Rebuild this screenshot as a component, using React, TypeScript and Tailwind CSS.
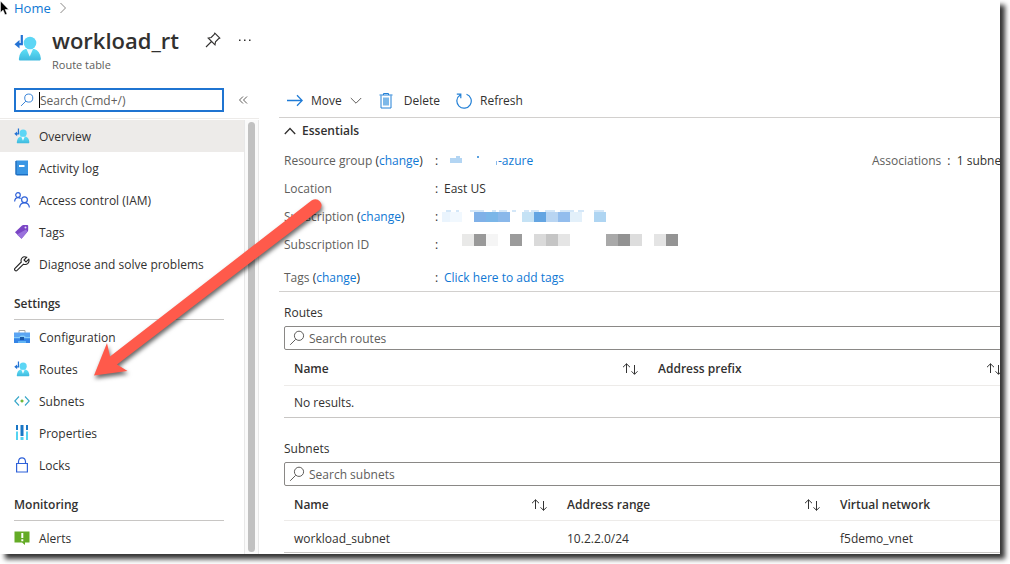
import type { ReactNode } from 'react';

interface MenuItem {
    label: string;
    icon: ReactNode;
    active?: boolean;
}

function RouteTableIcon({ className }: { className: string }) {
    return (
        <svg viewBox="0 0 28 28" className={className} aria-hidden="true">
            <defs>
                <linearGradient id="person" x1="0" y1="0" x2="0" y2="1">
                    <stop offset="0" stopColor="#5fe0f7" />
                    <stop offset="1" stopColor="#3fb9de" />
                </linearGradient>
            </defs>
            <path d="M5.5 26.500q-.9-.4-.6-2 1-8 6.500-9.500h9q5.500 1.500 6.500 9.500 0 1.600-1 2z" fill="url(#person)" />
            <path d="m12.500 15 3.200 7.500 3.300-7.500z" fill="#eefaff" />
            <circle cx="16" cy="9" r="6.300" fill="#5cd6f5" />
            <path d="M7.800 1v9.200H3.500" fill="none" stroke="#2372d4" strokeWidth="2.200" />
            <path d="M5.500 6v8.500L.5 10.200z" fill="#2372d4" />
        </svg>
    );
}

function LogIcon() {
    return (
        <svg viewBox="0 0 16 16" className="size-4" aria-hidden="true">
            <path d="M1.500 1.500 2.500.5h11.500v14.500H2.500q-1 0-1-1z" fill="#3a96e4" />
            <path d="M1.500 1.500 2.500.5v14.500q-1 0-1-1z" fill="#185fae" />
            <path d="M2.500 14H14v1.500H2.500z" fill="#1b6fc4" />
            <path d="M5 5h5.500v2H5z" fill="#fff" />
        </svg>
    );
}

function PeopleIcon() {
    return (
        <svg viewBox="0 0 16 16" className="size-4" fill="none" stroke="#2f62d9" strokeWidth="1.200" aria-hidden="true">
            <circle cx="4" cy="3" r="2.300" />
            <path d="M.6 9.500Q1 5.600 4 5.600q1.700 0 2.600 1" />
            <circle cx="10.500" cy="7.800" r="2.900" />
            <path d="M5.600 15.500q.5-4.700 4.900-4.700t4.900 4.700" />
        </svg>
    );
}

function TagIcon() {
    return (
        <svg viewBox="0 0 16 16" className="size-4" aria-hidden="true">
            <path d="M1 8.300 8 1.500q.6-.5 1.400-.5h3.800q1 0 1 1v4q0 .8-.5 1.400L7.500 14.800z" fill="#7a45c4" />
            <path d="m3 10.500 9-5 1.500 2L7.500 14.800z" fill="#9a72dc" />
            <circle cx="11.500" cy="3.400" r="1" fill="#e6d9fa" />
        </svg>
    );
}

function WrenchIcon() {
    return (
        <svg viewBox="0 0 16 16" className="size-4" fill="none" stroke="#222" strokeWidth="1.100" aria-hidden="true">
            <path d="M14.800 3.200 12 6 10 4l2.700-2.800Q9.700.1 8 2q-1.500 1.700-.7 4L1 12.300q-.9 1.100 0 2 1 1 2.100.1L9.500 8.200q2.600.9 4.400-.8 1.700-1.900.9-4.200z" />
        </svg>
    );
}

function ToolboxIcon() {
    return (
        <svg viewBox="0 0 16 16" className="size-4" aria-hidden="true">
            <path d="M5 4V1.500h6V4" fill="none" stroke="#aaa" strokeWidth="1" />
            <path d="M0 3.500h16v5H0z" fill="#5ba5f3" />
            <path d="M0 8.500h16V14H0z" fill="#3484e6" />
            <path d="M0 8h5l2-1.500h3L12 8h4v1.200H0z" fill="#86cdfa" />
            <path d="M6 8h4v3H6z" fill="#1a57a8" />
            <path d="M4 12h8v2H4z" fill="#62b5f5" />
        </svg>
    );
}

function SubnetIcon() {
    return (
        <svg viewBox="0 0 16 16" className="size-4" fill="none" aria-hidden="true">
            <path d="M5 3.500.8 8 5 12.500M11 3.500 15.200 8 11 12.500" stroke="#35a6c8" strokeWidth="1.100" />
            <path d="M8 6.500v3M6.500 8h3" stroke="#62b32b" strokeWidth="1.300" />
        </svg>
    );
}

function PropertiesIcon() {
    return (
        <svg viewBox="0 0 16 16" className="size-4" aria-hidden="true">
            <path d="M2 0h2v5H2zM6.500 0h3v11h-3zM12 0h2v5h-2z" fill="#1976c5" />
            <path d="M2 6.500h2V15H2zM12 6.500h2V15h-2zM6.500 12h3v3h-3z" fill="#53d3f1" />
        </svg>
    );
}

function LockIcon() {
    return (
        <svg viewBox="0 0 16 16" className="size-4" fill="none" stroke="#2f62d9" strokeWidth="1.200" aria-hidden="true">
            <path d="M2.600 6.500h10.800V15H2.600zM4.500 6.500v-2Q4.800.8 8 .8t3.500 3.700v2" />
        </svg>
    );
}

function AlertIcon() {
    return (
        <svg viewBox="0 0 16 16" className="size-4" aria-hidden="true">
            <path d="M.5 1.500h15v11H11v2.500l-3-2.500H.5z" fill="#64ab26" />
            <path d="M7.300 3h2v5h-2zM7.300 9.200h2v2h-2z" fill="#fff" />
        </svg>
    );
}

function SearchIcon({ className }: { className: string }) {
    return (
        <svg viewBox="0 0 16 16" className={className} fill="none" stroke="currentColor" strokeWidth="1" aria-hidden="true">
            <circle cx="10" cy="5.800" r="4.600" />
            <path d="m6.700 9.300-5.500 5.500" />
        </svg>
    );
}

function SortIcon() {
    return (
        <svg viewBox="0 0 16 12" className="h-3 w-4" fill="none" stroke="#333" strokeWidth="1" aria-hidden="true">
            <path d="M4.500 10V.8M1 4.200 4.500.8 8 4.200M12.500 2v9.300M9.500 8.300l3 3 3-3" />
        </svg>
    );
}

const general: MenuItem[] = [
    { label: 'Overview', icon: <RouteTableIcon className="size-4" />, active: true },
    { label: 'Activity log', icon: <LogIcon /> },
    { label: 'Access control (IAM)', icon: <PeopleIcon /> },
    { label: 'Tags', icon: <TagIcon /> },
    { label: 'Diagnose and solve problems', icon: <WrenchIcon /> },
];

const settings: MenuItem[] = [
    { label: 'Configuration', icon: <ToolboxIcon /> },
    { label: 'Routes', icon: <RouteTableIcon className="size-4" /> },
    { label: 'Subnets', icon: <SubnetIcon /> },
    { label: 'Properties', icon: <PropertiesIcon /> },
    { label: 'Locks', icon: <LockIcon /> },
];

const monitoring: MenuItem[] = [{ label: 'Alerts', icon: <AlertIcon /> }];

function MenuList({ items }: { items: MenuItem[] }) {
    return (
        <ul>
            {items.map((item) => (
                <li key={item.label}>
                    <a
                        href="#"
                        className={`flex h-8 items-center gap-[9px] pl-3.5 whitespace-nowrap ${item.active ? 'bg-[#edebe9]' : ''}`}
                    >
                        {item.icon}
                        <span className="pt-0.5">{item.label}</span>
                    </a>
                </li>
            ))}
        </ul>
    );
}

function MenuHeading({ children }: { children: ReactNode }) {
    return (
        <h2 className="mr-5 mb-px ml-3.5 flex h-10 items-center border-b border-[#c8c6c4] pt-2 font-semibold">
            {children}
        </h2>
    );
}

// One cell per colour, empty string leaves a gap
const subscriptionCells = ['#eaf4fd', '#f1f8fe', '', '#80b1e8', '#7bb6e8', '#8ab8ea', '', '#c5e2f5', '#64a5e2', '#b9d5f2', '#93bded', '#e3f0fa', '', '#afd5f2'];
const idCells = ['', '#e9e9e8', '#999999', '#f5f5f5', '', '#9b9b9b', '', '#dadada', '#c5c5c5', '#e5e5e5', '', '', '', '#a9a9a9', '#929292', '#dddddd', '', '#e4e4e4', '#949494'];

function Redacted({ cells, className }: { cells: string[]; className: string }) {
    return (
        <div className={`flex ${className}`}>
            {cells.map((color, i) => (
                <span key={i} className="w-3 first:w-2" style={{ backgroundColor: color || 'transparent' }} />
            ))}
        </div>
    );
}

function Field({ label, change, className, children }: { label: string; change?: boolean; className: string; children: ReactNode }) {
    return (
        <div className={`flex items-center ${className}`}>
            <dt className="w-[151px] text-[#605e5c]">
                {label}
                {change && (
                    <>
                        {' '}
                        <span className="text-[#323130]">(</span>
                        <a href="#" className="text-[#0f78d4]">change</a>
                        <span className="text-[#323130]">)</span>
                    </>
                )}
            </dt>
            <dd className="flex items-center">
                <span className="w-[9px]">:</span>
                {children}
            </dd>
        </div>
    );
}

function DataTable({ title, placeholder, columns, rows, empty }: { title: string; placeholder: string; columns: string[]; rows: string[][]; empty?: string }) {
    return (
        <section>
            <h2 className="flex h-[22px] items-center">{title}</h2>
            <label className="mt-0.5 flex h-6 items-center gap-1 rounded-xs border border-[#8a8886] pl-1">
                <SearchIcon className="size-4 text-[#605e5c]" />
                <input type="text" placeholder={placeholder} aria-label={placeholder} className="flex-1 pt-0.5 outline-none placeholder:text-[#605e5c]" />
            </label>
            <table className="w-full table-fixed border-collapse">
                <thead>
                    <tr className="h-[35px] border-b border-[#edebe9]">
                        {columns.map((column) => (
                            <th key={column} className="px-2.5 pt-1 text-left font-semibold">
                                <span className="flex items-center justify-between">
                                    {column}
                                    <button type="button" aria-label={`Sort by ${column}`}>
                                        <SortIcon />
                                    </button>
                                </span>
                            </th>
                        ))}
                    </tr>
                </thead>
                <tbody>
                    {rows.map((row) => (
                        <tr key={row[0]} className="h-8 border-b border-[#c8c6c4]">
                            {row.map((cell) => (
                                <td key={cell} className="px-2.5 pt-1">{cell}</td>
                            ))}
                        </tr>
                    ))}
                    {empty && (
                        <tr className="h-8 border-b border-[#c8c6c4]">
                            <td colSpan={columns.length} className="px-2.5 pt-1">{empty}</td>
                        </tr>
                    )}
                </tbody>
            </table>
        </section>
    );
}

export default function App() {
    return (
        <div className="overflow-hidden bg-white pr-2.5 pb-2.5 font-['Open_Sans','Noto_Sans',sans-serif] text-xs text-[#323130]">
            <div className="relative overflow-hidden bg-white shadow-[5px_5px_5px_rgba(0,0,0,0.8)]">
                <header className="h-[76px] pl-3.5">
                    <nav className="flex h-4 items-center gap-2">
                        <a href="#" className="text-[13px] leading-4 text-[#0f78d4]">Home</a>
                        <svg viewBox="0 0 8 12" className="h-3 w-2" fill="none" stroke="#8a8886" aria-hidden="true">
                            <path d="m1.500 1 5 5-5 5" />
                        </svg>
                    </nav>
                    <div className="flex pt-2">
                        <RouteTableIcon className="mt-2.5 size-7" />
                        <div className="ml-2.5">
                            <h1 className="text-[22px] leading-8 font-semibold">workload_rt</h1>
                            <p className="text-[11px] leading-[18px] text-[#605e5c]">Route table</p>
                        </div>
                        <button type="button" aria-label="Pin" className="mt-2 ml-[26px] size-4">
                            <svg viewBox="0 0 16 16" className="size-4" fill="none" stroke="#323130" strokeWidth="1.100">
                                <path d="M9.800 1.200 14.800 6.200 13.500 6.800 10.500 9.800 10 12.800 3.200 6l3-.5 3-3zM6.500 9.500 1 15" />
                            </svg>
                        </button>
                        <button type="button" aria-label="More" className="mt-2 ml-4 size-4">
                            <svg viewBox="0 0 16 16" className="size-4" fill="#323130">
                                <path d="M2 7.500h1.500V9H2zM7 7.500h1.500V9H7zM12 7.500h1.500V9H12z" />
                            </svg>
                        </button>
                    </div>
                </header>

                <div className="flex">
                    <aside className="w-[259px] shrink-0">
                        <div className="flex h-[43px] items-start border-b border-[#edebe9] pt-3 pl-3.5">
                            <label className="flex h-6 w-[210px] items-center border-2 border-[#1f74d1] pl-1">
                                <SearchIcon className="size-[14px] text-[#1f74d1]" />
                                <span className="ml-[5px] h-4 w-px bg-black" />
                                <input type="text" placeholder="Search (Cmd+/)" aria-label="Search menu" className="w-40 pt-0.5 outline-none placeholder:text-[#605e5c]" />
                            </label>
                            <button type="button" aria-label="Collapse menu" className="mt-1 ml-3 size-4">
                                <svg viewBox="0 0 16 16" className="size-4" fill="none" stroke="#605e5c">
                                    <path d="M7 4.500 3.500 8 7 11.500M11 4.500 7.500 8l3.500 3.500" />
                                </svg>
                            </button>
                        </div>
                        <div className="flex pt-px">
                            <nav className="flex-1">
                                <MenuList items={general} />
                                <MenuHeading>Settings</MenuHeading>
                                <MenuList items={settings} />
                                <MenuHeading>Monitoring</MenuHeading>
                                <MenuList items={monitoring} />
                            </nav>
                            <div className="flex w-[15px] border-x border-[#e8e8e8] bg-[#fafafa] px-[3px] pt-0.5 pb-0.5">
                                <div className="flex-1 rounded-full bg-[#c1c1c1]" />
                            </div>
                        </div>
                    </aside>

                    <main className="ml-5 min-w-0 flex-1 overflow-hidden">
                        <div className="flex h-[42px] items-center border-b border-[#d2d0ce] pt-2 pl-2">
                            <button type="button" className="flex items-center gap-2">
                                <svg viewBox="0 0 16 16" className="size-4" fill="none" stroke="#1f7bd6" strokeWidth="1.300" aria-hidden="true">
                                    <path d="M0 7.500h15.200M10 2.300l5.200 5.200-5.200 5.200" />
                                </svg>
                                Move
                                <svg viewBox="0 0 12 8" className="h-2 w-3" fill="none" stroke="#605e5c" aria-hidden="true">
                                    <path d="m.8 1 5.200 5.200L11.200 1" />
                                </svg>
                            </button>
                            <button type="button" className="ml-4 flex items-center gap-2.5">
                                <svg viewBox="0 0 16 16" className="size-4" fill="none" stroke="#2380d6" aria-hidden="true">
                                    <path d="M5 4.500h6v8H5z" fill="#7db8e8" stroke="none" />
                                    <path d="M3 2.500v12.500h10V2.500M1.500 2h13M5.500 2V.5h5V2" />
                                </svg>
                                Delete
                            </button>
                            <button type="button" className="ml-4 flex items-center gap-2">
                                <svg viewBox="0 0 16 16" className="size-4" fill="none" stroke="#2380d6" strokeWidth="1.200" aria-hidden="true">
                                    <path d="M10.500 1.200A7.200 7.200 0 1 1 4.200 1.900M.8 1.200h4v4" />
                                </svg>
                                Refresh
                            </button>
                        </div>

                        <div className="min-w-[1097px]">
                            <section className="border-b border-[#d2d0ce] pt-1 pl-[5px]">
                                <button type="button" className="flex h-[18px] items-center gap-1.5 font-semibold">
                                    <svg viewBox="0 0 12 8" className="h-2 w-3" fill="none" stroke="#323130" strokeWidth="1.300" aria-hidden="true">
                                        <path d="m.8 7 5.200-5.500L11.200 7" />
                                    </svg>
                                    Essentials
                                </button>
                                <dl className="grid grid-cols-[588px_1fr] pt-[7px]">
                                    <Field label="Resource group" change className="h-7">
                                        <svg viewBox="0 0 54 14" className="h-3.5 w-[54px]" aria-hidden="true">
                                            <path d="M6 4h12v5H6zM12 2h4v2h-4z" fill="#b3d5f3" />
                                            <path d="M33 2h2v2h-2z" fill="#5aa1e0" />
                                            <path d="M52 7h1v4h-1z" fill="#8bbcec" />
                                        </svg>
                                        <a href="#" className="text-[#0f78d4]">-azure</a>
                                    </Field>
                                    <div className="flex h-7 items-center gap-1.5 whitespace-nowrap">
                                        <dt className="text-[#605e5c]">Associations</dt>
                                        <dd>:&nbsp; 1 subnet associations</dd>
                                    </div>
                                    <Field label="Location" className="col-span-2 h-7">East US</Field>
                                    <Field label="Subscription" change className="col-span-2 h-7">
                                        <div className="mb-0.5 -ml-0.5">
                                            <svg viewBox="0 0 168 2" className="h-0.5 w-[168px]" aria-hidden="true">
                                                <path d="M4 1h5M14 1h3M28 1h14M50 1h4M57 1h8M70 1h4M82 1h5M89 1h8M103 1h10M118 1h14M136 1h6M152 1h10" stroke="#a9cff1" />
                                            </svg>
                                            <Redacted cells={subscriptionCells} className="h-2.5" />
                                        </div>
                                    </Field>
                                    <Field label="Subscription ID" className="col-span-2 h-7">
                                        <Redacted cells={idCells} className="mb-2.5 ml-2.5 h-3" />
                                    </Field>
                                    <Field label="Tags" change className="col-span-2 mt-1.5 h-[26px]">
                                        <a href="#" className="text-[#0f78d4]">Click here to add tags</a>
                                    </Field>
                                </dl>
                            </section>

                            <div className="flex flex-col gap-5 pt-2.5 pl-[5px]">
                                <DataTable title="Routes" placeholder="Search routes" columns={['Name', 'Address prefix', 'Next hop']} rows={[]} empty="No results." />
                                <DataTable
                                    title="Subnets"
                                    placeholder="Search subnets"
                                    columns={['Name', 'Address range', 'Virtual network', 'Security group']}
                                    rows={[['workload_subnet', '10.2.2.0/24', 'f5demo_vnet', '-']]}
                                />
                            </div>
                        </div>
                    </main>
                </div>

                {/* Callout arrow pointing at the Routes entry */}
                <svg viewBox="0 0 240 190" className="pointer-events-none absolute top-[194px] left-[88px] h-[190px] w-[240px] drop-shadow-[1px_3px_2px_rgba(0,0,0,0.6)]" aria-hidden="true">
                    <path d="M6 181.500 19 149l3 13.500L223.500 6.500q5-3 8.500 1t-.5 8.500L29 170.500l10.500 6.500z" fill="#ff5a4b" />
                </svg>

                {/* Mouse pointer */}
                <svg viewBox="0 0 10 16" className="pointer-events-none absolute top-0 left-0 h-4 w-2.5" aria-hidden="true">
                    <path d="M.5 1v11.500l2.600-2.400 1.900 4.700 2-.9-1.900-4.400h3.600z" fill="#000" stroke="#fff" strokeWidth=".5" />
                </svg>
            </div>
        </div>
    );
}
